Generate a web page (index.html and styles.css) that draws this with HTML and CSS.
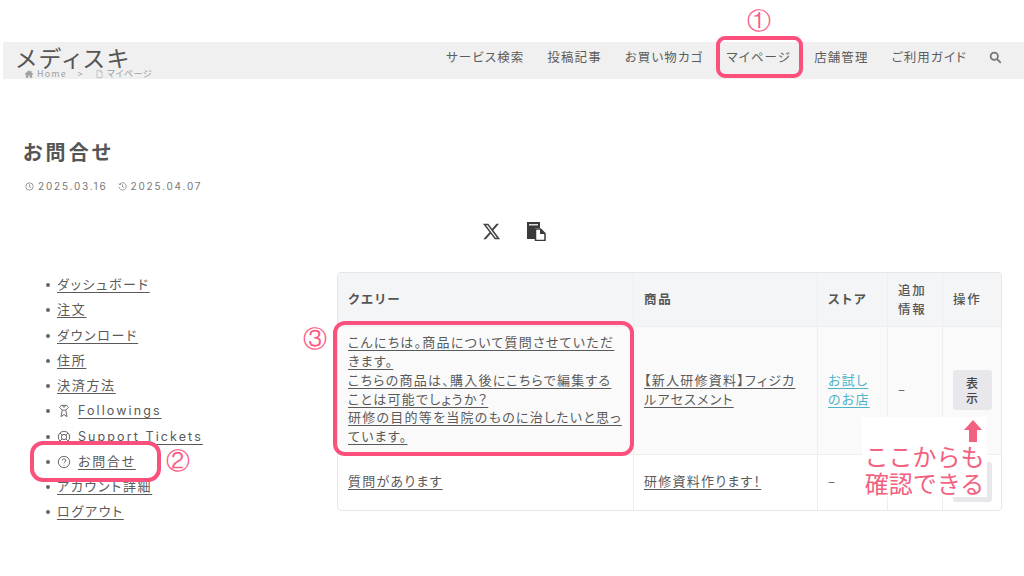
FILE: index.html
```html
<!DOCTYPE html>
<html lang="ja">
<head>
<meta charset="utf-8">
<title>お問合せ</title>
<link rel="stylesheet" href="styles.css">
</head>
<body>
<div class="page">
  <header class="site-header">
    <div class="brand">
      <div class="site-title">メディスキ</div>
      <div class="crumbs">
        <svg class="crumb-icon" viewBox="0 0 16 16"><path d="M8 2 1 8l1 1 1-.8V14h4v-4h2v4h4V8.200l1 .8 1-1-3-2.600V3h-2v1.700z"/></svg>
        <span>Home</span>
        <span class="crumb-sep">&gt;</span>
        <svg class="crumb-file" viewBox="0 0 16 16"><path d="M3.500 1.500h6l3 3v10h-9zM9.500 1.500v3h3"/></svg>
        <span class="crumb-current">マイページ</span>
      </div>
    </div>
    <nav class="main-nav">
      <a>サービス検索</a>
      <a>投稿記事</a>
      <a>お買い物カゴ</a>
      <a>マイページ</a>
      <a>店舗管理</a>
      <a>ご利用ガイド</a>
      <svg class="search-icon" viewBox="0 0 16 16"><circle cx="6.500" cy="6.500" r="4.500"/><path d="m10 10 4.500 4.500"/></svg>
    </nav>
  </header>

  <section class="page-head">
    <h1>お問合せ</h1>
    <div class="dates">
      <svg class="date-icon" viewBox="0 0 16 16"><circle cx="8" cy="8" r="6.500"/><path d="M8 4v4.500l3 1.500"/></svg>
      <span>2025.03.16</span>
      <svg class="date-icon date-second" viewBox="0 0 16 16"><path d="M3.200 3.600A6.500 6.500 0 1 1 1.800 9M1.500 2.500l1.500 2.500 2.500-1M8 4.500v4l2.500 1.500"/></svg>
      <span>2025.04.07</span>
    </div>
    <div class="share">
      <svg class="x-icon" viewBox="0 0 24 24"><path d="M18.244 2.250h3.308l-7.227 8.260 8.502 11.240H16.170l-5.214-6.817L4.990 21.750H1.680l7.730-8.835L1.254 2.250H8.080l4.713 6.231zm-1.161 17.520h1.833L7.084 4.126H5.117z"/></svg>
      <svg class="copy-icon" viewBox="0 0 20 20"><path class="copy-dark" d="M1 1h13v6H9v11H1z"/><path class="copy-slot" d="M3 3h9v1.500H3z"/><path class="copy-page" d="M9.500 8h5l4.500 4.500V19.500H9.500z"/><path class="copy-dark" d="M14 7.500l5.500 5.500H14z"/></svg>
    </div>
  </section>

  <div class="content">
    <ul class="account-menu">
      <li><a>ダッシュボード</a></li>
      <li><a>注文</a></li>
      <li><a>ダウンロード</a></li>
      <li><a>住所</a></li>
      <li><a>決済方法</a></li>
      <li><a class="latin"><svg class="menu-icon" viewBox="0 0 16 16"><path d="M5 1.500h6l2 2.500-3 3H6L3 4zM6 7l-1.500 7.500L8 12l3.500 2.500L10 7M6 1.500 8 4l2-2.500"/></svg>Followings</a></li>
      <li><a class="latin"><svg class="menu-icon" viewBox="0 0 16 16"><circle cx="8" cy="8" r="6.500"/><circle cx="8" cy="8" r="3"/><path d="m3.500 3.500 2.500 2.500M12.500 3.500 10 6M3.500 12.500 6 10M12.500 12.500 10 10"/></svg>Support Tickets</a></li>
      <li><a><svg class="menu-icon" viewBox="0 0 16 16"><circle cx="8" cy="8" r="6.500"/><path d="M6 6.300a2 2 0 1 1 3 1.700c-.7.400-1 .8-1 1.600M8 11.200v.8"/></svg>お問合せ</a></li>
      <li><a>アカウント詳細</a></li>
      <li><a>ログアウト</a></li>
    </ul>

    <table class="queries">
      <colgroup>
        <col class="col-query"><col class="col-product"><col class="col-store"><col class="col-extra"><col class="col-action">
      </colgroup>
      <thead>
        <tr class="head-row">
          <th>クエリー</th><th>商品</th><th>ストア</th><th class="wide">追加情報</th><th class="wide">操作</th>
        </tr>
      </thead>
      <tbody>
        <tr class="row-shaded">
          <td><a>こんにちは。商品について質問させていただきます。<br>こちらの商品は、購入後にこちらで編集することは可能でしょうか？<br>研修の目的等を当院のものに治したいと思っています。</a></td>
          <td><a>【新人研修資料】フィジカルアセスメント</a></td>
          <td><a class="store-link">お試しのお店</a></td>
          <td>–</td>
          <td><button class="view-btn">表示</button></td>
        </tr>
        <tr class="row-plain">
          <td><a>質問があります</a></td>
          <td><a>研修資料作ります！</a></td>
          <td>–</td>
          <td></td>
          <td><button class="view-btn">表示</button></td>
        </tr>
      </tbody>
    </table>
  </div>

  <div class="mark mark-nav"></div>
  <div class="mark mark-menu"></div>
  <div class="mark mark-query"></div>
  <div class="num num-1">①</div>
  <div class="num num-2">②</div>
  <div class="num num-3">③</div>
  <div class="callout">
    <svg class="callout-arrow" viewBox="0 0 18 22"><path d="M9 0 18 10H13V22H5V10H0z"/></svg>
    <div>ここからも<br>確認できる</div>
  </div>
</div>
</body>
</html>
```
FILE: styles.css
```css
* { box-sizing: border-box; }
html, body { margin: 0; background: #fff; }
body {
  font-family: "Noto Sans CJK JP", "Noto Sans", sans-serif;
  font-feature-settings: "palt" 1;
  color: #5a5a5a;
  font-size: 12.500px;
}
.page { position: relative; width: 1024px; height: 576px; overflow: hidden; padding-top: 42px; }

.site-header {
  margin-left: 3px;
  height: 37px;
  background: #f0f0f0;
  display: flex;
  justify-content: space-between;
  padding-left: 13px;
}
.site-title { font-size: 23px; line-height: 26px; letter-spacing: 3.200px; color: #555; margin-top: 2px; white-space: nowrap; }
.crumbs {
  display: flex; align-items: center; gap: 3px;
  font-size: 9px; line-height: 10px; letter-spacing: 1.100px; color: #a0a0a0;
  margin: -1px 0 0 8px; height: 10px; width: 140px;
}
.crumb-icon { width: 10px; height: 10px; fill: #a0a0a0; }
.crumb-sep { margin: 0 8px; }
.crumb-file { width: 9px; height: 10px; fill: none; stroke: #a0a0a0; }
.crumb-current { letter-spacing: .5px; }
.main-nav { display: flex; align-items: center; gap: 23px; padding-right: 22px; height: 30px; }
.main-nav a { letter-spacing: 1.100px; line-height: 30px; white-space: nowrap; color: #5c5c5c; }
.search-icon { width: 13px; height: 13px; fill: none; stroke: #777; stroke-width: 2.200; margin-left: -1px; }

.page-head { padding-left: 23px; }
h1 { margin: 58px 0 0; font-size: 20px; line-height: 30px; letter-spacing: 3.200px; font-weight: 700; color: #555; }
.dates {
  display: flex; align-items: center; gap: 4px; margin: 12px 0 0 2px; height: 14px;
  font-family: "Inter", sans-serif; font-size: 10px; letter-spacing: 1.800px; color: #777;
}
.date-icon { width: 9px; height: 9px; fill: none; stroke: #777; stroke-width: 1.300; }
.date-second { margin-left: 6px; }
.share { display: flex; justify-content: center; gap: 25px; margin: 27px 0 0 -23px; height: 22px; padding-left: 3px; align-items: center; }
.x-icon { width: 19px; height: 19px; fill: #444; }
.copy-icon { width: 20px; height: 20px; }
.copy-dark { fill: #3a3a3a; }
.copy-slot { fill: #ddd; }
.copy-page { fill: #fff; stroke: #3a3a3a; stroke-width: 1.500; }

.content { display: flex; margin-top: 29px; }
.account-menu {
  width: 337px; margin: 0; padding: 0 0 0 57px; list-style: none; flex: none;
  font-size: 13px; letter-spacing: 1.700px; line-height: 25px;
}
.account-menu li { height: 25.250px; }
.account-menu li::before {
  content: ""; display: inline-block; width: 4px; height: 4px; border-radius: 50%;
  background: #666; margin: 0 7px 0 -11px; vertical-align: 2px;
}
.account-menu a, .queries a { text-decoration: underline; text-underline-offset: 3px; text-decoration-thickness: 1px; }
.latin { font-family: "Inter", "Noto Sans CJK JP", sans-serif; font-size: 12.500px; letter-spacing: 2.100px; }
.menu-icon { width: 14px; height: 14px; margin-right: 7px; fill: none; stroke: #666; stroke-width: 1.100; vertical-align: -3px; }

.queries {
  width: 665px; height: 238px; table-layout: fixed; flex: none; margin-top: 1px;
  border-collapse: separate; border-spacing: 0;
  border: 1px solid #e6e6e8; border-radius: 4px; overflow: hidden;
  font-size: 13px; letter-spacing: 1.250px; line-height: 18.700px;
}
.col-query { width: 296px; }
.col-product { width: 184px; }
.col-store { width: 70px; }
.col-extra { width: 55px; }
.col-action { width: 58px; }
.queries th, .queries td {
  padding: 0 10px; text-align: left; vertical-align: middle;
  border-right: 1px solid #eeeef0; border-bottom: 1px solid #eeeef0;
}
.queries td { padding-bottom: 2px; }
.queries th:last-child, .queries td:last-child { border-right: 0; }
.queries tr:last-child td { border-bottom: 0; }
.head-row { height: 54px; background: #f4f5f7; }
.queries th { font-size: 12.500px; font-weight: 700; color: #555; letter-spacing: 1.800px; }
.queries th.wide { font-weight: 500; letter-spacing: 1.800px; }
.row-shaded { height: 128px; background: #fafafb; }
.row-plain { height: 55px; }
.store-link { color: #4fb3c8; }
.view-btn {
  width: 39px; height: 40px; padding: 0 10px; border: 0; border-radius: 3px;
  background: #e8e8ec; color: #444; font: inherit; font-size: 12px; font-weight: 500; line-height: 15px; letter-spacing: 1px;
  display: block;
}

.mark { position: absolute; border: 4px solid #fb4f7c; border-radius: 9px; }
.mark-nav { left: 716px; top: 36px; width: 87px; height: 42px; }
.mark-menu { left: 30px; top: 441px; width: 131px; height: 41px; border-radius: 13px; }
.mark-query { left: 333px; top: 321px; width: 301px; height: 135px; border-radius: 12px; }
.num { position: absolute; color: #fb5c85; font-size: 24px; line-height: 26px; font-family: "DejaVu Sans", sans-serif; font-weight: 300; }
.num-1 { left: 747px; top: 8px; }
.num-2 { left: 166px; top: 448px; }
.num-3 { left: 303px; top: 326px; }
.callout {
  position: absolute; left: 862px; top: 417px; width: 125px; height: 80px;
  background: #fff; color: #f2617f; font-size: 24px; line-height: 27px; text-align: center;
  font-feature-settings: normal;
  display: flex; flex-direction: column; align-items: center;
}
.callout-arrow { width: 18px; height: 22px; fill: #f2617f; margin: 3px 5px 0 0; align-self: flex-end; }
```
